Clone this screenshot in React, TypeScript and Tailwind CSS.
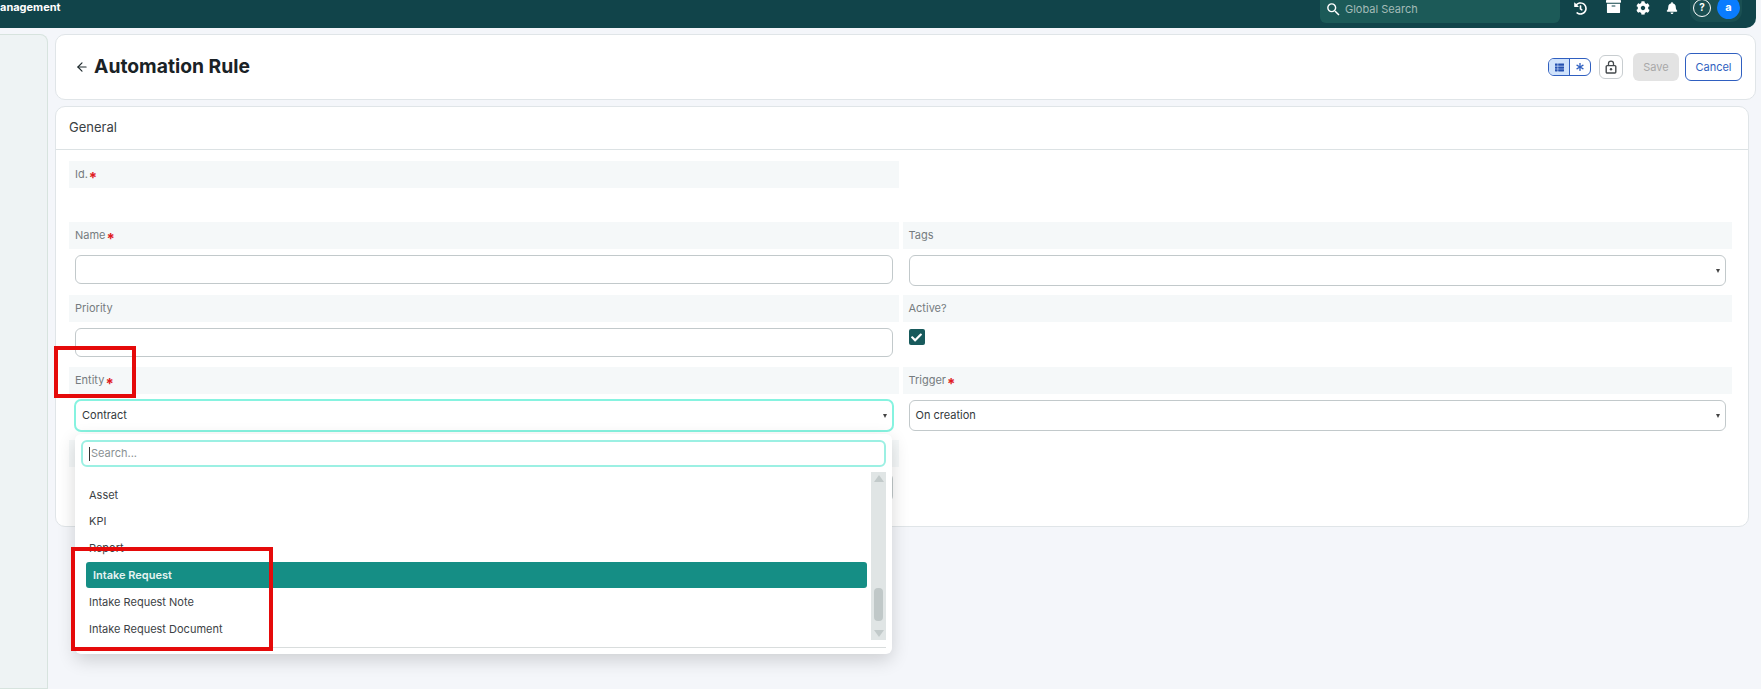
import { ArrowLeft } from 'lucide-react'
import { FaArchive, FaAsterisk, FaBell, FaCheck, FaCog, FaHistory, FaThList } from 'react-icons/fa'
import { MdSearch } from 'react-icons/md'

function Label({ text, required }: { text?: string; required?: boolean }) {
  return (
    <div className="h-[27px] bg-[#f5f8f9] pl-[6px] flex items-center text-[11px] text-[#757c7f]">
      {text}
      {required && <span className="ml-[1px] mt-[5px] text-[15px] leading-none font-bold text-[#e01b24]">*</span>}
    </div>
  )
}

function TextBox() {
  return <div className="mx-[6px] mt-[6px] h-[29px] rounded-[6px] border border-[#c2c9cb] bg-white" />
}

function SelectBox({ value, focused }: { value?: string; focused?: boolean }) {
  return (
    <div
      className={
        focused
          ? 'mx-[5px] mt-[5px] h-[33px] rounded-[7px] border-2 border-[#86f3e0] bg-white flex items-center justify-between pl-[6px] pr-[5px] text-[11px] text-[#33393c]'
          : 'mx-[6px] mt-[6px] h-[31px] rounded-[6px] border border-[#c2c9cb] bg-white flex items-center justify-between pl-[6px] pr-[5px] text-[11px] text-[#33393c]'
      }
    >
      <span>{value}</span>
      <span className="w-0 h-0 border-x-[2.5px] border-x-transparent border-t-[4px] border-t-[#444]" />
    </div>
  )
}

function Option({ text }: { text: string }) {
  return <div className="h-[26px] flex items-center pl-[8px] text-[11px] text-[#3c4245]">{text}</div>
}

function LockIcon() {
  return (
    <svg width="12" height="14" viewBox="0 0 12 14" fill="none">
      <path d="M3.5 6V3.6a2.5 2.5 0 0 1 5 0V6" stroke="#44494c" strokeWidth="1.3" />
      <rect x="1.2" y="5.6" width="9.6" height="7.4" rx="1" stroke="#44494c" strokeWidth="1.4" />
      <circle cx="6" cy="9.3" r="1.2" fill="#44494c" />
    </svg>
  )
}

function EntityDropdown() {
  return (
    <div className="absolute left-[6px] top-[67px] z-10 w-[817px] h-[220px] rounded-[6px] bg-white shadow-[0_6px_18px_rgba(0,0,0,0.16)] px-[6px] pt-[6px]">
      <div className="h-[27px] rounded-[6px] border-2 border-[#9cf0e3] flex items-center pl-[6px] text-[11px] text-[#8a9194]">
        <span className="w-px h-[14px] bg-[#333] mr-[1px]" />
        Search...
      </div>
      <div className="flex h-[168px] mt-[5px]">
        <div className="flex-1 min-w-0 overflow-hidden pr-[4px]">
          <div className="pt-[10px]">
            <Option text="Asset" />
            <Option text="KPI" />
            <div className="h-[27px] pt-[1px] flex items-center pl-[8px] text-[11px] text-[#3c4245]">Report</div>
          </div>
          <div className="mt-[1px] ml-[5px] h-[26px] rounded-[3px] bg-[#158e85] flex items-center pl-[7px] text-[11px] font-semibold text-[#e6f4f2]">
            Intake Request
          </div>
          <div className="h-[27px] flex items-center pl-[8px] text-[11px] text-[#3c4245] mt-[1px]">Intake Request Note</div>
          <div className="h-[27px] flex items-center pl-[8px] text-[11px] text-[#3c4245]">Intake Request Document</div>
        </div>
        <div className="w-[15px] bg-[#e0e5e5] flex flex-col items-center justify-between py-[3px]">
          <span className="w-0 h-0 border-x-[5px] border-x-transparent border-b-[7px] border-b-[#c2caca]" />
          <div className="mt-auto mb-[9px] w-[9px] h-[33px] rounded-[4px] bg-[#c0c8c8]" />
          <span className="w-0 h-0 border-x-[5px] border-x-transparent border-t-[7px] border-t-[#c2caca]" />
        </div>
      </div>
      <div className="mt-[7px] h-px bg-[#d9dddd]" />
    </div>
  )
}

export default function App() {
  return (
    <div className="relative h-[689px] w-[1761px] overflow-hidden bg-[#f4f6fa] font-['Inter',sans-serif]">
      <header className="mr-[5px] h-[28px] rounded-br-[10px] bg-[#11444a] flex items-start justify-between">
        <div className="pt-[1px] text-[11px] font-bold leading-[12px] text-white">anagement</div>
        <div className="flex items-start">
          <div className="w-[240px] h-[23px] rounded-b-[6px] bg-[#1c5a58] flex items-center pl-[5px] pb-[5px] gap-[3px] text-[11px] text-[#a3bab7]">
            <MdSearch size={17} className="text-white" />
            Global Search
          </div>
          <div className="ml-[14px] flex items-center h-[16px] text-white">
            <FaHistory size={13} />
            <FaArchive size={15} className="ml-[19px] -mt-[4px]" />
            <FaCog size={14} className="ml-[15px]" />
            <FaBell size={12} className="ml-[16px]" />
          </div>
          <div className="ml-[12px] mr-[14px] w-[52px] h-[22px] rounded-b-[11px] bg-[#1a4f52] flex items-center pl-[3px] pb-[7px]">
            <span className="w-[18px] h-[18px] rounded-full border border-white flex items-center justify-center text-[10px] font-bold text-white">?</span>
            <span className="ml-[6px] w-[23px] h-[23px] shrink-0 rounded-full bg-[#0a7cff] flex items-center justify-center text-[11px] font-bold text-white">a</span>
          </div>
        </div>
      </header>

      <div className="flex mt-[6px] h-[655px]">
        <aside className="w-[48px] rounded-tr-[8px] border border-l-0 border-[#d7e3de] bg-[#eef3f4]" />

        <main className="ml-[7px] flex-1 pr-[5px]">
          <div className="h-[66px] rounded-[10px] border border-[#e0e5e8] bg-white flex items-center justify-between pl-[19px] pr-[13px]">
            <div className="flex items-center gap-[5px]">
              <ArrowLeft size={14} className="text-[#1f2a2e]" />
              <h1 className="text-[19.3px] font-bold text-[#1a2226] leading-none">Automation Rule</h1>
            </div>
            <div className="flex items-center">
              <div className="flex w-[43px] h-[18px] rounded-[6px] border border-[#2f5fc0] overflow-hidden">
                <span className="w-[21px] bg-[#cfe2fb] border-r border-[#2f5fc0] flex items-center justify-center text-[#2450b0]">
                  <FaThList size={9} />
                </span>
                <span className="flex-1 flex items-center justify-center text-[#2f5fc0]">
                  <FaAsterisk size={8} />
                </span>
              </div>
              <div className="ml-[8px] w-[24px] h-[24px] rounded-[6px] border border-[#c8cdd0] flex items-center justify-center">
                <LockIcon />
              </div>
              <div className="ml-[10px] w-[46px] h-[28px] rounded-[6px] bg-[#e3e3e3] flex items-center justify-center text-[11px] text-[#a8a8a8]">Save</div>
              <div className="ml-[6px] w-[57px] h-[28px] rounded-[6px] border border-[#2f5fc0] bg-white flex items-center justify-center text-[11px] text-[#2f5fc0]">Cancel</div>
            </div>
          </div>

          <section className="mt-[6px] mr-[7px] h-[421px] rounded-[10px] border border-[#e0e5e8] bg-white">
            <div className="h-[43px] border-b border-[#dce2e4] flex items-center pl-[13px] text-[13px] text-[#3a4144]">General</div>
            <div className="grid grid-cols-2 gap-x-[4px] pl-[13px] pr-[16px] pt-[11px]">
              <div className="h-[61px]"><Label text="Id." required /></div>
              <div className="h-[61px]" />
              <div className="h-[73px]"><Label text="Name" required /><TextBox /></div>
              <div className="h-[73px]"><Label text="Tags" /><SelectBox /></div>
              <div className="h-[72px]"><Label text="Priority" /><TextBox /></div>
              <div className="h-[72px]">
                <Label text="Active?" />
                <div className="ml-[6px] mt-[7px] w-[16px] h-[16px] rounded-[2px] bg-[#185a5c] flex items-center justify-center text-white">
                  <FaCheck size={11} />
                </div>
              </div>
              <div className="relative h-[73px]">
                <Label text="Entity" required />
                <SelectBox value="Contract" focused />
                <EntityDropdown />
              </div>
              <div className="h-[73px]"><Label text="Trigger" required /><SelectBox value="On creation" /></div>
              <div><Label /><TextBox /></div>
            </div>
          </section>
        </main>
      </div>

      <div className="absolute left-[54px] top-[346px] z-20 w-[82px] h-[52px] border-[4px] border-[#e50a0a]" />
      <div className="absolute left-[71px] top-[547px] z-20 w-[202px] h-[104px] border-[4px] border-[#e50a0a]" />
    </div>
  )
}
